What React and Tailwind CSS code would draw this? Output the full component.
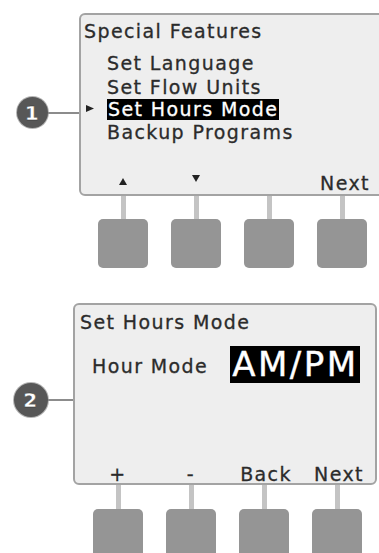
import React from "react";

const font = { fontFamily: '"DejaVu Sans", Verdana, sans-serif' };

function Callout({ n, size }) {
  return (
    <div
      className="flex items-center justify-center rounded-full bg-[#575757] text-white font-bold text-[20px] leading-none shrink-0 ring-1 ring-[#b5b5b5]"
      style={{ width: size, height: size }}
    >
      {n}
    </div>
  );
}

function Up() {
  return (
    <svg width="8" height="7" viewBox="0 0 8 7">
      <polygon points="4,0 8,7 0,7" fill="#222" />
    </svg>
  );
}
function Down() {
  return (
    <svg width="8" height="7" viewBox="0 0 8 7">
      <polygon points="0,0 8,0 4,7" fill="#222" />
    </svg>
  );
}

function Buttons({ pl, conn }) {
  return (
    <div className={`flex gap-x-[23px] ${pl}`}>
      {[0, 1, 2, 3].map((i) => (
        <div key={i} className="flex flex-col items-center w-[50px]">
          <div className={`w-[5px] bg-[#c4c4c4] ${conn}`} />
          <div className="w-[50px] h-[49px] rounded-[5px] bg-[#959595] shrink-0" />
        </div>
      ))}
    </div>
  );
}

export default function App() {
  return (
    <div
      className="w-[379px] h-[553px] overflow-hidden bg-white text-[#2b2b2b] text-[19px] tracking-[1.4px] [-webkit-text-stroke:0.3px_#2b2b2b]"
      style={font}
    >
      {/* Section 1 */}
      <div className="flex pt-[13px]">
        <div className="w-[79px] shrink-0 flex items-center pl-[17px] pt-[84px] self-start">
          <Callout n="1" size={31} />
          <div className="flex-1 h-[2px] bg-[#8c8c8c]" />
        </div>
        <div className="flex flex-col shrink-0">
          <div className="w-[310px] h-[183px] border-2 border-[#a3a3a3] rounded-[6px] bg-[#eeeeee] flex flex-col">
            <div className="pl-[3px] pt-[5px] leading-[23px]">Special Features</div>
            <div className="mt-[8px] flex flex-col leading-[24px]">
              <div className="pl-[26px]">Set Language</div>
              <div className="pl-[26px]">Set Flow Units</div>
              <div className="flex items-center pl-[5px]">
                <div className="w-[21px] flex items-center -mt-[2px]">
                  <svg width="8" height="7" viewBox="0 0 8 7">
                    <polygon points="0,0 8,3.5 0,7" fill="#222" />
                  </svg>
                </div>
                <span className="bg-black text-white [-webkit-text-stroke:0.3px_#ffffff] pl-[1px] pr-[1px] leading-[21px]">
                  Set Hours Mode
                </span>
              </div>
              <div className="pl-[26px]">Backup Programs</div>
            </div>
            <div className="mt-auto grid grid-cols-[50px_50px_50px_50px] gap-x-[23px] pl-[17px] leading-[21px]">
              <div className="flex justify-center items-center -translate-y-[2px]"><Up /></div>
              <div className="flex justify-center items-center -translate-y-[5px]"><Down /></div>
              <div />
              <div className="text-center -mr-[6px]">Next</div>
            </div>
          </div>
          <Buttons pl="pl-[19px]" conn="h-[23px]" />
        </div>
      </div>

      {/* Section 2 */}
      <div className="flex pt-[35px]">
        <div className="w-[73px] shrink-0 flex items-center pl-[14px] pt-[80px] self-start">
          <Callout n="2" size={34} />
          <div className="flex-1 h-[2px] bg-[#8c8c8c]" />
        </div>
        <div className="flex flex-col shrink-0">
          <div className="w-[304px] h-[182px] border-2 border-[#a3a3a3] rounded-[6px] bg-[#eeeeee] flex flex-col">
            <div className="pl-[5px] pt-[6px] leading-[23px]">Set Hours Mode</div>
            <div className="mt-[12px] flex items-end">
              <div className="pl-[17px] mb-[5px] leading-[23px]">Hour Mode</div>
              <div className="ml-[22px] h-[37px] leading-[37px] text-[34px] tracking-[2.5px] bg-black text-white [-webkit-text-stroke:0.4px_#ffffff] pl-[2px] pr-[1px]">
                AM/PM
              </div>
            </div>
            <div className="mt-auto grid grid-cols-[50px_50px_50px_50px] gap-x-[23px] pl-[18px] leading-[21px] -mb-[2px]">
              <div className="text-center">+</div>
              <div className="text-center">-</div>
              <div className="text-center -mr-[4px]">Back</div>
              <div className="text-center -mr-[4px]">Next</div>
            </div>
          </div>
          <Buttons pl="pl-[20px]" conn="h-[24px]" />
        </div>
      </div>
    </div>
  );
}
